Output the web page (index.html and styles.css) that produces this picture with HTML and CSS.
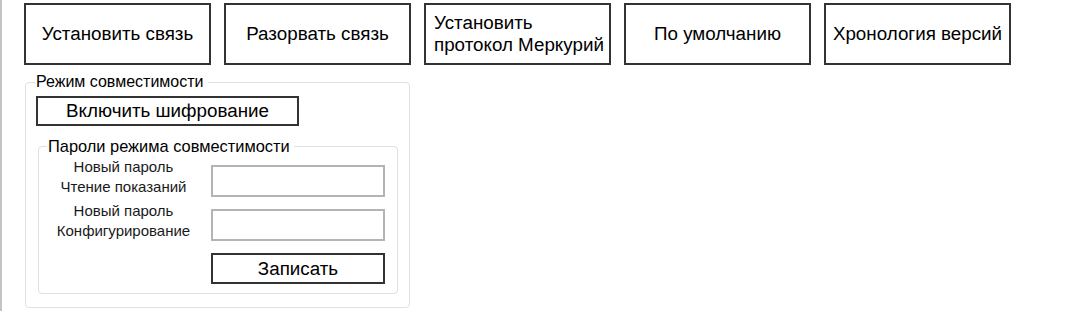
FILE: index.html
```html
<!DOCTYPE html>
<html lang="ru">
<head>
<meta charset="utf-8">
<link rel="stylesheet" href="styles.css">
</head>
<body>
<div class="page">
  <div class="toolbar">
    <button class="tb-btn">Установить связь</button>
    <button class="tb-btn">Разорвать связь</button>
    <button class="tb-btn two-line">Установить<br>протокол Меркурий</button>
    <button class="tb-btn">По умолчанию</button>
    <button class="tb-btn">Хронология версий</button>
  </div>
  <fieldset class="compat">
    <legend class="compat-legend">Режим совместимости</legend>
    <button class="enc-btn">Включить шифрование</button>
    <fieldset class="pass">
      <legend class="pass-legend">Пароли режима совместимости</legend>
      <div class="pass-grid">
        <div class="lbl">Новый пароль<br>Чтение показаний</div>
        <div class="inp"></div>
        <div class="lbl">Новый пароль<br>Конфигурирование</div>
        <div class="inp"></div>
        <div></div>
        <button class="save-btn">Записать</button>
      </div>
    </fieldset>
  </fieldset>
</div>
</body>
</html>
```
FILE: styles.css
```css
html, body {
  margin: 0;
  padding: 0;
  background: #fff;
  height: 100%;
}
body {
  font-family: "Liberation Sans", Arial, sans-serif;
  color: #000;
}
.page {
  box-sizing: border-box;
  height: 311px;
  border-left: 2px solid #c4c4c4;
  padding-left: 22px;
  padding-top: 3px;
}
.toolbar {
  display: flex;
  gap: 13px;
}
.tb-btn {
  box-sizing: border-box;
  width: 187px;
  height: 62px;
  background: #fff;
  border: 2px solid #333;
  font-family: inherit;
  font-size: 18.8px;
  color: #000;
  padding: 0;
  margin: 0;
}
.tb-btn.two-line {
  text-align: left;
  padding-left: 8px;
  line-height: 22px;
}
.compat {
  box-sizing: border-box;
  width: 385px;
  margin: 9px 0 0 1px;
  padding: 0 10px 10px 10px;
  border: 1px solid #dce2e6;
  border-radius: 4px;
  height: 234px;
}
.compat-legend {
  font-size: 16px;
  padding: 0 4px 0 1px;
  margin-left: -1px;
  line-height: 16px;
}
.enc-btn {
  box-sizing: border-box;
  width: 263px;
  height: 30px;
  background: #fff;
  border: 2px solid #333;
  font-family: inherit;
  font-size: 18.8px;
  color: #000;
  padding: 0;
  margin: 6px 0 0 0;
  display: block;
}
.pass {
  box-sizing: border-box;
  width: 360px;
  margin: 12px 0 0 2px;
  padding: 3px 10px 10px 10px;
  border: 1px solid #dce2e6;
  border-radius: 4px;
  height: 156px;
}
.pass-legend {
  font-size: 16.4px;
  padding: 0 4px 0 1px;
  margin-left: -2px;
  line-height: 16px;
}
.pass-grid {
  display: grid;
  grid-template-columns: 149px 174px;
  column-gap: 13px;
  row-gap: 4px;
  align-items: end;
}
.lbl {
  font-size: 15px;
  line-height: 20px;
  text-align: center;
  color: #1a1a1a;
}
.inp {
  box-sizing: border-box;
  height: 32px;
  border: 2px solid #b4b4b4;
  background: #fff;
  margin-bottom: 0;
}
.save-btn {
  box-sizing: border-box;
  height: 31px;
  width: 174px;
  background: #fff;
  border: 2px solid #333;
  font-family: inherit;
  font-size: 18.8px;
  color: #000;
  padding: 0;
  margin: 8px 0 0 0;
}
```
